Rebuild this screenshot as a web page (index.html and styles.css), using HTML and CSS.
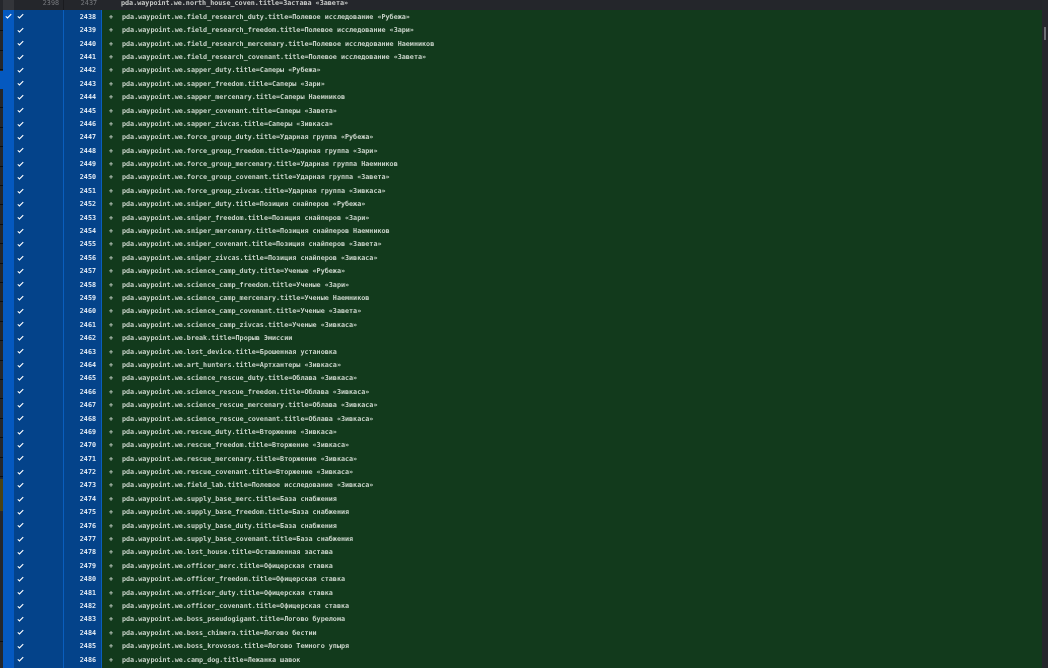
FILE: index.html
```html
<!DOCTYPE html>
<html lang="ru">
<head>
<meta charset="utf-8">
<title>Diff</title>
<link rel="stylesheet" href="styles.css">
</head>
<body>
<svg class="defs" width="0" height="0"><symbol id="c" viewBox="0 0 8 7"><path d="M.8 4 2.8 5.7 7.2 1.2" fill="none" stroke="#fff" stroke-width="1.3"/></symbol></svg>
<div class="app">
<aside class="overview">
<div class="seg s1"></div><div class="seg s2"></div><div class="seg s3"></div><div class="seg s4"></div><div class="seg s5"></div><div class="seg s6"></div>
</aside>
<main class="diff">
<div class="head"><span class="hsel"></span><span class="hold"><span class="soft">2398</span></span><span class="hnew"><span class="soft">2437</span></span><span class="htext soft">pda.waypoint.we.north_house_coven.title=Застава «Завета»</span></div>
<div class="row"><span class="sel"><svg class="chk"><use href="#c"/></svg></span><span class="b"><svg class="chk"><use href="#c"/></svg></span><span class="n"><span class="soft">2438</span></span><span class="p soft">+</span><span class="t soft">pda.waypoint.we.field_research_duty.title=Полевое исследование «Рубежа»</span></div>
<div class="row"><span class="sel"></span><span class="b"><svg class="chk"><use href="#c"/></svg></span><span class="n"><span class="soft">2439</span></span><span class="p soft">+</span><span class="t soft">pda.waypoint.we.field_research_freedom.title=Полевое исследование «Зари»</span></div>
<div class="row"><span class="sel"></span><span class="b"><svg class="chk"><use href="#c"/></svg></span><span class="n"><span class="soft">2440</span></span><span class="p soft">+</span><span class="t soft">pda.waypoint.we.field_research_mercenary.title=Полевое исследование Наемников</span></div>
<div class="row"><span class="sel"></span><span class="b"><svg class="chk"><use href="#c"/></svg></span><span class="n"><span class="soft">2441</span></span><span class="p soft">+</span><span class="t soft">pda.waypoint.we.field_research_covenant.title=Полевое исследование «Завета»</span></div>
<div class="row"><span class="sel"></span><span class="b"><svg class="chk"><use href="#c"/></svg></span><span class="n"><span class="soft">2442</span></span><span class="p soft">+</span><span class="t soft">pda.waypoint.we.sapper_duty.title=Саперы «Рубежа»</span></div>
<div class="row"><span class="sel"></span><span class="b"><svg class="chk"><use href="#c"/></svg></span><span class="n"><span class="soft">2443</span></span><span class="p soft">+</span><span class="t soft">pda.waypoint.we.sapper_freedom.title=Саперы «Зари»</span></div>
<div class="row"><span class="sel"></span><span class="b"><svg class="chk"><use href="#c"/></svg></span><span class="n"><span class="soft">2444</span></span><span class="p soft">+</span><span class="t soft">pda.waypoint.we.sapper_mercenary.title=Саперы Наемников</span></div>
<div class="row"><span class="sel"></span><span class="b"><svg class="chk"><use href="#c"/></svg></span><span class="n"><span class="soft">2445</span></span><span class="p soft">+</span><span class="t soft">pda.waypoint.we.sapper_covenant.title=Саперы «Завета»</span></div>
<div class="row"><span class="sel"></span><span class="b"><svg class="chk"><use href="#c"/></svg></span><span class="n"><span class="soft">2446</span></span><span class="p soft">+</span><span class="t soft">pda.waypoint.we.sapper_zivcas.title=Саперы «Зивкаса»</span></div>
<div class="row"><span class="sel"></span><span class="b"><svg class="chk"><use href="#c"/></svg></span><span class="n"><span class="soft">2447</span></span><span class="p soft">+</span><span class="t soft">pda.waypoint.we.force_group_duty.title=Ударная группа «Рубежа»</span></div>
<div class="row"><span class="sel"></span><span class="b"><svg class="chk"><use href="#c"/></svg></span><span class="n"><span class="soft">2448</span></span><span class="p soft">+</span><span class="t soft">pda.waypoint.we.force_group_freedom.title=Ударная группа «Зари»</span></div>
<div class="row"><span class="sel"></span><span class="b"><svg class="chk"><use href="#c"/></svg></span><span class="n"><span class="soft">2449</span></span><span class="p soft">+</span><span class="t soft">pda.waypoint.we.force_group_mercenary.title=Ударная группа Наемников</span></div>
<div class="row"><span class="sel"></span><span class="b"><svg class="chk"><use href="#c"/></svg></span><span class="n"><span class="soft">2450</span></span><span class="p soft">+</span><span class="t soft">pda.waypoint.we.force_group_covenant.title=Ударная группа «Завета»</span></div>
<div class="row"><span class="sel"></span><span class="b"><svg class="chk"><use href="#c"/></svg></span><span class="n"><span class="soft">2451</span></span><span class="p soft">+</span><span class="t soft">pda.waypoint.we.force_group_zivcas.title=Ударная группа «Зивкаса»</span></div>
<div class="row"><span class="sel"></span><span class="b"><svg class="chk"><use href="#c"/></svg></span><span class="n"><span class="soft">2452</span></span><span class="p soft">+</span><span class="t soft">pda.waypoint.we.sniper_duty.title=Позиция снайперов «Рубежа»</span></div>
<div class="row"><span class="sel"></span><span class="b"><svg class="chk"><use href="#c"/></svg></span><span class="n"><span class="soft">2453</span></span><span class="p soft">+</span><span class="t soft">pda.waypoint.we.sniper_freedom.title=Позиция снайперов «Зари»</span></div>
<div class="row"><span class="sel"></span><span class="b"><svg class="chk"><use href="#c"/></svg></span><span class="n"><span class="soft">2454</span></span><span class="p soft">+</span><span class="t soft">pda.waypoint.we.sniper_mercenary.title=Позиция снайперов Наемников</span></div>
<div class="row"><span class="sel"></span><span class="b"><svg class="chk"><use href="#c"/></svg></span><span class="n"><span class="soft">2455</span></span><span class="p soft">+</span><span class="t soft">pda.waypoint.we.sniper_covenant.title=Позиция снайперов «Завета»</span></div>
<div class="row"><span class="sel"></span><span class="b"><svg class="chk"><use href="#c"/></svg></span><span class="n"><span class="soft">2456</span></span><span class="p soft">+</span><span class="t soft">pda.waypoint.we.sniper_zivcas.title=Позиция снайперов «Зивкаса»</span></div>
<div class="row"><span class="sel"></span><span class="b"><svg class="chk"><use href="#c"/></svg></span><span class="n"><span class="soft">2457</span></span><span class="p soft">+</span><span class="t soft">pda.waypoint.we.science_camp_duty.title=Ученые «Рубежа»</span></div>
<div class="row"><span class="sel"></span><span class="b"><svg class="chk"><use href="#c"/></svg></span><span class="n"><span class="soft">2458</span></span><span class="p soft">+</span><span class="t soft">pda.waypoint.we.science_camp_freedom.title=Ученые «Зари»</span></div>
<div class="row"><span class="sel"></span><span class="b"><svg class="chk"><use href="#c"/></svg></span><span class="n"><span class="soft">2459</span></span><span class="p soft">+</span><span class="t soft">pda.waypoint.we.science_camp_mercenary.title=Ученые Наемников</span></div>
<div class="row"><span class="sel"></span><span class="b"><svg class="chk"><use href="#c"/></svg></span><span class="n"><span class="soft">2460</span></span><span class="p soft">+</span><span class="t soft">pda.waypoint.we.science_camp_covenant.title=Ученые «Завета»</span></div>
<div class="row"><span class="sel"></span><span class="b"><svg class="chk"><use href="#c"/></svg></span><span class="n"><span class="soft">2461</span></span><span class="p soft">+</span><span class="t soft">pda.waypoint.we.science_camp_zivcas.title=Ученые «Зивкаса»</span></div>
<div class="row"><span class="sel"></span><span class="b"><svg class="chk"><use href="#c"/></svg></span><span class="n"><span class="soft">2462</span></span><span class="p soft">+</span><span class="t soft">pda.waypoint.we.break.title=Прорыв Эмиссии</span></div>
<div class="row"><span class="sel"></span><span class="b"><svg class="chk"><use href="#c"/></svg></span><span class="n"><span class="soft">2463</span></span><span class="p soft">+</span><span class="t soft">pda.waypoint.we.lost_device.title=Брошенная установка</span></div>
<div class="row"><span class="sel"></span><span class="b"><svg class="chk"><use href="#c"/></svg></span><span class="n"><span class="soft">2464</span></span><span class="p soft">+</span><span class="t soft">pda.waypoint.we.art_hunters.title=Артхантеры «Зивкаса»</span></div>
<div class="row"><span class="sel"></span><span class="b"><svg class="chk"><use href="#c"/></svg></span><span class="n"><span class="soft">2465</span></span><span class="p soft">+</span><span class="t soft">pda.waypoint.we.science_rescue_duty.title=Облава «Зивкаса»</span></div>
<div class="row"><span class="sel"></span><span class="b"><svg class="chk"><use href="#c"/></svg></span><span class="n"><span class="soft">2466</span></span><span class="p soft">+</span><span class="t soft">pda.waypoint.we.science_rescue_freedom.title=Облава «Зивкаса»</span></div>
<div class="row"><span class="sel"></span><span class="b"><svg class="chk"><use href="#c"/></svg></span><span class="n"><span class="soft">2467</span></span><span class="p soft">+</span><span class="t soft">pda.waypoint.we.science_rescue_mercenary.title=Облава «Зивкаса»</span></div>
<div class="row"><span class="sel"></span><span class="b"><svg class="chk"><use href="#c"/></svg></span><span class="n"><span class="soft">2468</span></span><span class="p soft">+</span><span class="t soft">pda.waypoint.we.science_rescue_covenant.title=Облава «Зивкаса»</span></div>
<div class="row"><span class="sel"></span><span class="b"><svg class="chk"><use href="#c"/></svg></span><span class="n"><span class="soft">2469</span></span><span class="p soft">+</span><span class="t soft">pda.waypoint.we.rescue_duty.title=Вторжение «Зивкаса»</span></div>
<div class="row"><span class="sel"></span><span class="b"><svg class="chk"><use href="#c"/></svg></span><span class="n"><span class="soft">2470</span></span><span class="p soft">+</span><span class="t soft">pda.waypoint.we.rescue_freedom.title=Вторжение «Зивкаса»</span></div>
<div class="row"><span class="sel"></span><span class="b"><svg class="chk"><use href="#c"/></svg></span><span class="n"><span class="soft">2471</span></span><span class="p soft">+</span><span class="t soft">pda.waypoint.we.rescue_mercenary.title=Вторжение «Зивкаса»</span></div>
<div class="row"><span class="sel"></span><span class="b"><svg class="chk"><use href="#c"/></svg></span><span class="n"><span class="soft">2472</span></span><span class="p soft">+</span><span class="t soft">pda.waypoint.we.rescue_covenant.title=Вторжение «Зивкаса»</span></div>
<div class="row"><span class="sel"></span><span class="b"><svg class="chk"><use href="#c"/></svg></span><span class="n"><span class="soft">2473</span></span><span class="p soft">+</span><span class="t soft">pda.waypoint.we.field_lab.title=Полевое исследование «Зивкаса»</span></div>
<div class="row"><span class="sel"></span><span class="b"><svg class="chk"><use href="#c"/></svg></span><span class="n"><span class="soft">2474</span></span><span class="p soft">+</span><span class="t soft">pda.waypoint.we.supply_base_merc.title=База снабжения</span></div>
<div class="row"><span class="sel"></span><span class="b"><svg class="chk"><use href="#c"/></svg></span><span class="n"><span class="soft">2475</span></span><span class="p soft">+</span><span class="t soft">pda.waypoint.we.supply_base_freedom.title=База снабжения</span></div>
<div class="row"><span class="sel"></span><span class="b"><svg class="chk"><use href="#c"/></svg></span><span class="n"><span class="soft">2476</span></span><span class="p soft">+</span><span class="t soft">pda.waypoint.we.supply_base_duty.title=База снабжения</span></div>
<div class="row"><span class="sel"></span><span class="b"><svg class="chk"><use href="#c"/></svg></span><span class="n"><span class="soft">2477</span></span><span class="p soft">+</span><span class="t soft">pda.waypoint.we.supply_base_covenant.title=База снабжения</span></div>
<div class="row"><span class="sel"></span><span class="b"><svg class="chk"><use href="#c"/></svg></span><span class="n"><span class="soft">2478</span></span><span class="p soft">+</span><span class="t soft">pda.waypoint.we.lost_house.title=Оставленная застава</span></div>
<div class="row"><span class="sel"></span><span class="b"><svg class="chk"><use href="#c"/></svg></span><span class="n"><span class="soft">2479</span></span><span class="p soft">+</span><span class="t soft">pda.waypoint.we.officer_merc.title=Офицерская ставка</span></div>
<div class="row"><span class="sel"></span><span class="b"><svg class="chk"><use href="#c"/></svg></span><span class="n"><span class="soft">2480</span></span><span class="p soft">+</span><span class="t soft">pda.waypoint.we.officer_freedom.title=Офицерская ставка</span></div>
<div class="row"><span class="sel"></span><span class="b"><svg class="chk"><use href="#c"/></svg></span><span class="n"><span class="soft">2481</span></span><span class="p soft">+</span><span class="t soft">pda.waypoint.we.officer_duty.title=Офицерская ставка</span></div>
<div class="row"><span class="sel"></span><span class="b"><svg class="chk"><use href="#c"/></svg></span><span class="n"><span class="soft">2482</span></span><span class="p soft">+</span><span class="t soft">pda.waypoint.we.officer_covenant.title=Офицерская ставка</span></div>
<div class="row"><span class="sel"></span><span class="b"><svg class="chk"><use href="#c"/></svg></span><span class="n"><span class="soft">2483</span></span><span class="p soft">+</span><span class="t soft">pda.waypoint.we.boss_pseudogigant.title=Логово бурелома</span></div>
<div class="row"><span class="sel"></span><span class="b"><svg class="chk"><use href="#c"/></svg></span><span class="n"><span class="soft">2484</span></span><span class="p soft">+</span><span class="t soft">pda.waypoint.we.boss_chimera.title=Логово бестии</span></div>
<div class="row"><span class="sel"></span><span class="b"><svg class="chk"><use href="#c"/></svg></span><span class="n"><span class="soft">2485</span></span><span class="p soft">+</span><span class="t soft">pda.waypoint.we.boss_krovosos.title=Логово Темного упыря</span></div>
<div class="row"><span class="sel"></span><span class="b"><svg class="chk"><use href="#c"/></svg></span><span class="n"><span class="soft">2486</span></span><span class="p soft">+</span><span class="t soft">pda.waypoint.we.camp_dog.title=Лежанка шавок</span></div>
<div class="row"><span class="sel"></span><span class="b"></span><span class="n"></span><span class="p"></span><span class="t"></span></div>
</main>
<div class="scroll"><div class="thumb"></div></div>
</div>
</body>
</html>
```
FILE: styles.css
```css
html, body { margin: 0; height: 100%; overflow: hidden; background: #25272c; }
.defs { position: absolute; }
.app { display: flex; height: 668px; overflow: hidden; font-family: "DejaVu Sans Mono", monospace; font-size: 6.74px; font-weight: 700; }
.overview { width: 3px; flex: none; display: flex; flex-direction: column; background: #25272c; }
.seg { flex: none; }
.s1, .s3 { background: repeating-linear-gradient(to bottom, transparent 0, transparent 18.4px, #0d0e10 18.4px, #0d0e10 19.4px); }
.s1 { height: 71px; background-position: 0 12px; }
.s2 { height: 18px; background: #0559c0; }
.s3 { height: 390px; }
.s4 { height: 32px; background: #4a4214; }
.s5 { height: 131px; background: linear-gradient(to top, #0d0e10 0, #0d0e10 1px, transparent 1px); }
.diff { flex: 1; min-width: 0; display: flex; flex-direction: column; }
.soft { display: inline-block; filter: blur(0.25px); }
.head { display: flex; height: 9.8px; flex: none; background: #24262b; color: #7a7c80; overflow: hidden; line-height: 6px; align-items: flex-start; }
.hsel { width: 11px; flex: none; background: #33353a; height: 100%; }
.hold { width: 45px; flex: none; text-align: right; font-weight: 400; padding-right: 4px; }
.hnew { width: 33px; padding-right: 5px; flex: none; text-align: right; font-weight: 400; border-left: 1px solid #1a1b1f; height: 100%; }
.htext { margin-left: 19px; color: #c8cac8; white-space: pre; }
.row { display: flex; height: 13.4px; flex: none; line-height: 15px; color: #c9d3c9; background: #123a1c; }
.sel { width: 11px; flex: none; background: #0559c0; display: flex; align-items: center; justify-content: center; }
.b { width: 50px; flex: none; box-sizing: border-box; padding-left: 3px; background: #04438a; display: flex; align-items: center; border-right: 1px solid #0a5ebd; }
.n { width: 38px; flex: none; box-sizing: border-box; padding-right: 5px; text-align: right; color: #dfe8f3; background: #04438a; border-right: 1px solid #0a5ebd; }
.p { width: 20px; flex: none; box-sizing: border-box; padding-left: 7px; }
.t { white-space: pre; }
.chk { width: 7px; height: 6px; display: block; }
.scroll { width: 6px; flex: none; background: #25272c; padding-top: 27px; display: flex; justify-content: center; }
.thumb { width: 2px; height: 13px; background: #6c6e73; }
```
